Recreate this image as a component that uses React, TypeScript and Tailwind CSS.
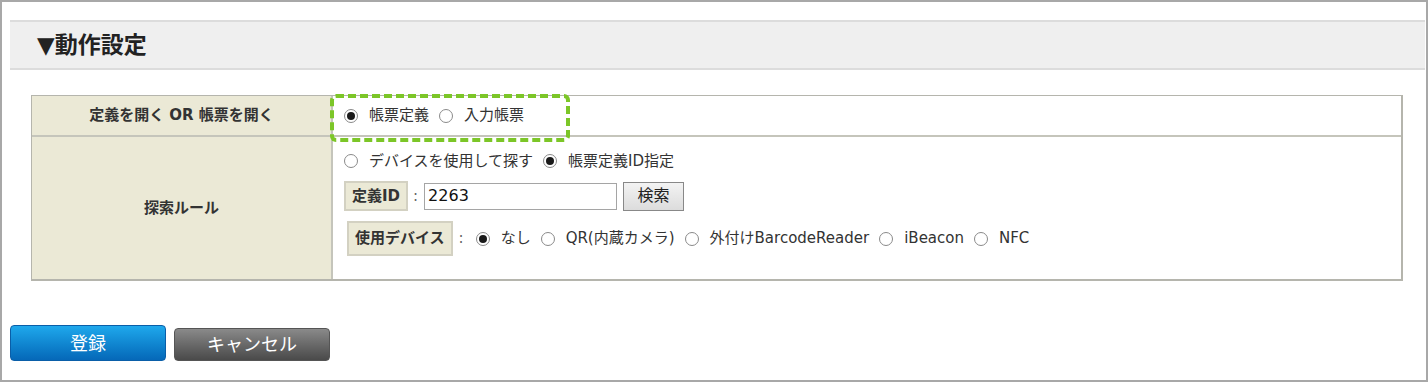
import React from "react";

const FONT = { fontFamily: '"DejaVu Sans", "Noto Sans CJK JP", sans-serif' };

function Radio({ checked, label }: { checked?: boolean; label: string }) {
  return (
    <span className="inline-flex items-center mr-[10px]">
      <span className="w-[14px] h-[14px] rounded-full border border-[#8a8a8a] bg-white flex items-center justify-center mr-[11px]">
        {checked && <span className="w-[8px] h-[8px] rounded-full bg-[#1a1a1a]" />}
      </span>
      <span>{label}</span>
    </span>
  );
}

export default function App() {
  return (
    <div
      className="w-[1428px] h-[382px] bg-white border-2 border-[#a8a8a8] text-[#333] text-[15px] overflow-hidden"
      style={FONT}
    >
      <div className="mt-[18px] ml-[8px] mr-[1px] h-[50px] bg-[#efefef] border-y-2 border-[#dcdcdc] flex items-center pl-[27px]">
        <span className="text-[23px] font-bold text-[#222]">▼動作設定</span>
      </div>

      <div className="mt-[25px] ml-[29px] w-[1372px] border border-[#b5b5ad] border-b-2 border-r-2">
        <div className="flex h-[41px] border-b-2 border-[#c5c5bb]">
          <div className="w-[301px] bg-[#ebe9d6] flex items-center justify-center font-bold text-[15px] border-r-2 border-[#c5c5bb]">
            定義を開く OR 帳票を開く
          </div>
          <div className="flex-1 flex items-center pl-[11px] relative">
            <Radio checked label="帳票定義" />
            <Radio label="入力帳票" />
            <div className="absolute left-[-3px] top-[-2px] w-[240px] h-[48px] border-[4px] border-dashed border-[#7cc628] rounded-[6px]" />
          </div>
        </div>
        <div className="flex h-[142px]">
          <div className="w-[301px] bg-[#ebe9d6] flex items-center justify-center font-bold text-[15px] border-r-2 border-[#c5c5bb]">
            探索ルール
          </div>
          <div className="flex-1 pl-[11px] pt-[14px]">
            <div className="flex items-center h-[20px]">
              <Radio label="デバイスを使用して探す" />
              <Radio checked label="帳票定義ID指定" />
            </div>
            <div className="flex items-center mt-[10px] h-[30px]">
              <div className="h-[30px] px-[6px] bg-[#ebe9d6] border-2 border-[#d3d1c2] flex items-center font-bold text-[15px]">
                定義ID
              </div>
              <span className="ml-[5px] mr-[6px] text-[#666]">:</span>
              <div className="w-[193px] h-[27px] border border-[#a5a5a5] flex items-center px-[3px] text-[16px] text-[#111]">
                2263
              </div>
              <div className="ml-[6px] w-[61px] h-[29px] border border-[#888] bg-gradient-to-b from-[#f3f3f3] to-[#dcdcdc] flex items-center justify-center text-[16px] text-[#222]">
                検索
              </div>
            </div>
            <div className="flex items-center mt-[10px] h-[35px] pl-[3px]">
              <div className="h-[35px] px-[6px] bg-[#ebe9d6] border-2 border-[#d3d1c2] flex items-center font-bold text-[15px]">
                使用デバイス
              </div>
              <span className="ml-[6px] mr-[12px] text-[#666]">:</span>
              <Radio checked label="なし" />
              <Radio label="QR(内蔵カメラ)" />
              <Radio label="外付けBarcodeReader" />
              <Radio label="iBeacon" />
              <Radio label="NFC" />
            </div>
          </div>
        </div>
      </div>

      <div className="mt-[44px] ml-[8px] flex items-end gap-[8px]">
        <div className="w-[156px] h-[36px] rounded-[4px] border border-[#0a5ea8] bg-gradient-to-b from-[#1fa8ec] to-[#0668b8] flex items-center justify-center text-white text-[18px]">
          登録
        </div>
        <div className="w-[156px] h-[33px] rounded-[4px] border border-[#555] bg-gradient-to-b from-[#8a8a8a] to-[#4a4a4a] flex items-center justify-center text-white text-[18px]">
          キャンセル
        </div>
      </div>
    </div>
  );
}
